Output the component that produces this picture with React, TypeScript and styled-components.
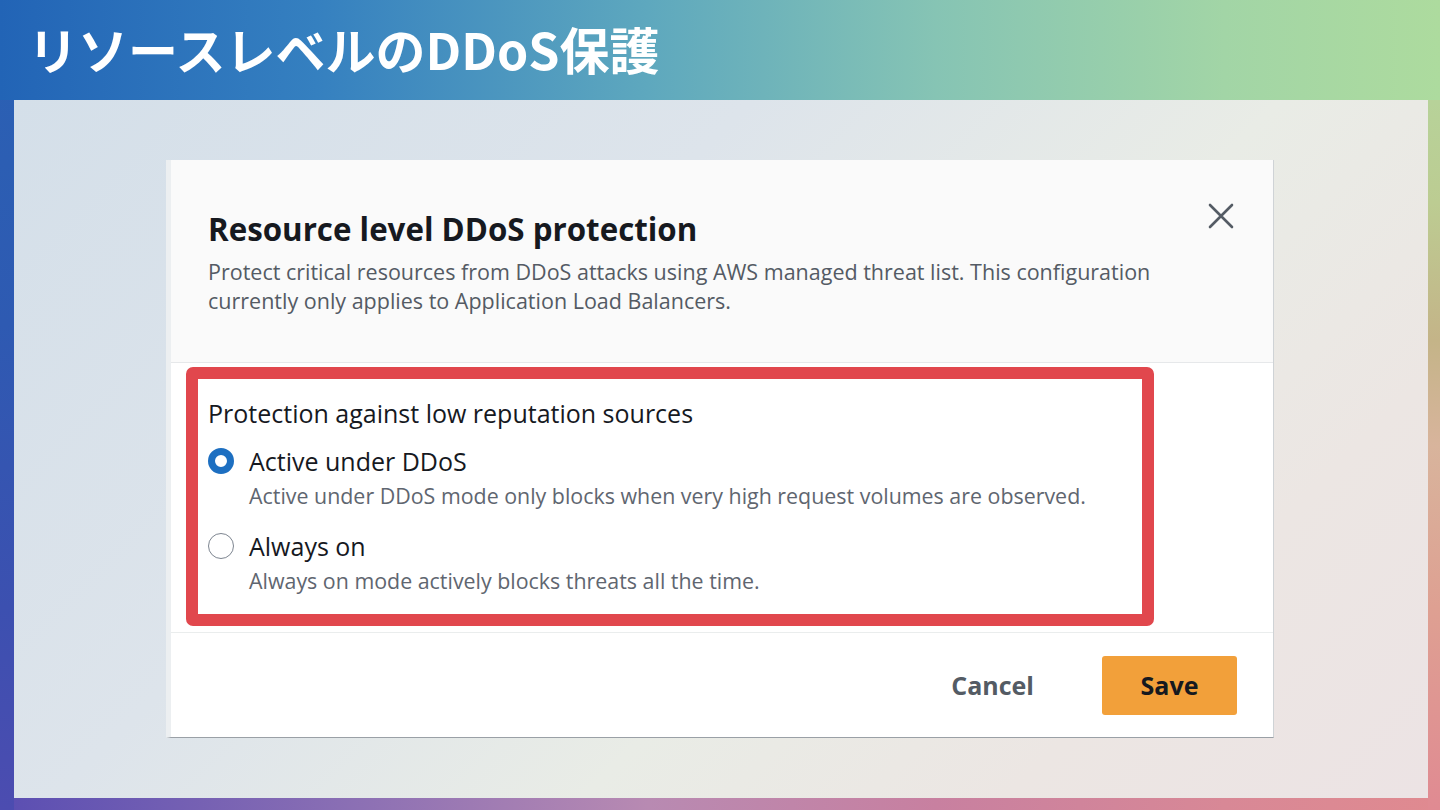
import React from "react";
import styled, { createGlobalStyle } from "styled-components";

const GlobalStyle = createGlobalStyle`
  html, body { margin: 0; padding: 0; }
  body { font-family: "Open Sans", "Noto Sans", sans-serif; }
`;

const Slide = styled.div`
  width: 1440px;
  height: 810px;
  display: flex;
  flex-direction: column;
  overflow: hidden;
  background:
    linear-gradient(to right, #2264b6 0%, #3580c0 22%, #5ea8be 45%, #86c4b4 65%, #a2d5a6 85%, #addb9e 100%) 0 0 / 100% 100px no-repeat,
    linear-gradient(to bottom, #2a62b4 0%, #2e5ab2 40%, #3c50b0 75%, #4c4cb0 100%) 0 0 / 14px 100% no-repeat,
    linear-gradient(to bottom, #b2d8a0 0%, #bccc92 25%, #c4b488 42%, #d8b49c 55%, #dea092 75%, #e08a92 100%) 100% 0 / 12px 100% no-repeat,
    linear-gradient(to right, #5a4eb2 0%, #8c70b4 25%, #b88ab2 45%, #c880a0 65%, #d88896 85%, #e08a90 100%) 0 100% / 100% 12px no-repeat,
    #8a9ab8;
`;

const TitleBar = styled.header`
  height: 100px;
  flex: none;
  display: flex;
  align-items: center;
  padding-left: 28px;
  box-sizing: border-box;
`;

const Title = styled.h1`
  margin: 0;
  color: #ffffff;
  font-family: "Noto Sans CJK JP", "Noto Sans", sans-serif;
  font-weight: 700;
  font-size: 50px;
  letter-spacing: 0;
  line-height: 1;
  padding-bottom: 4px;
`;

const Panel = styled.main`
  flex: 1;
  margin: 0 12px 12px 14px;
  padding: 60px 0 0 152px;
  box-sizing: border-box;
  background: linear-gradient(135deg, #d4dfe9 0%, #dde4eb 35%, #e9ece6 60%, #ece6e3 80%, #ece3e4 100%);
`;

const Dialog = styled.section`
  width: 1108px;
  height: 578px;
  display: flex;
  flex-direction: column;
  background: #ffffff;
  border-left: 5px solid #eceff1;
  border-right: 1px solid #cfd3d6;
  border-bottom: 1.5px solid #9aa0a6;
  box-sizing: border-box;
`;

const Header = styled.div`
  height: 203px;
  flex: none;
  position: relative;
  background: #fafafa;
  border-bottom: 1px solid #e6e8ea;
  padding: 49px 60px 0 37px;
  box-sizing: border-box;
`;

const Heading = styled.h2`
  margin: 0;
  font-size: 31.3px;
  line-height: 40px;
  font-weight: 700;
  color: #16191f;
`;

const Description = styled.p`
  margin: 8px 0 0;
  font-size: 21.5px;
  line-height: 29px;
  color: #545b64;
  max-width: 1000px;
`;

const CloseButton = styled.button`
  position: absolute;
  top: 42px;
  right: 38px;
  width: 28px;
  height: 28px;
  padding: 0;
  border: none;
  background: transparent;
  display: flex;
  align-items: center;
  justify-content: center;
`;

const Body = styled.div`
  flex: 1;
  padding: 4px 0 0 15px;
  box-sizing: border-box;
  border-bottom: 1px solid #eaeded;
`;

const Highlight = styled.div`
  width: 968px;
  height: 259px;
  border: 12px solid #e1474d;
  border-radius: 7px;
  padding: 19px 0 0 10px;
  box-sizing: border-box;
  display: flex;
  flex-direction: column;
`;

const GroupLabel = styled.div`
  font-size: 25px;
  line-height: 30px;
  color: #16191f;
  margin-bottom: 18px;
`;

const Option = styled.label`
  display: grid;
  grid-template-columns: 26px 1fr;
  column-gap: 15px;
  margin-bottom: 20px;
`;

const Radio = styled.span<{ $checked?: boolean }>`
  width: 26px;
  height: 26px;
  margin-top: 2px;
  border-radius: 50%;
  box-sizing: border-box;
  border: ${(p) => (p.$checked ? "7.5px solid #1d6fc1" : "1.5px solid #7d8590")};
  background: #ffffff;
`;

const OptionText = styled.div`
  display: flex;
  flex-direction: column;
`;

const OptionTitle = styled.span`
  font-size: 25px;
  line-height: 30px;
  color: #16191f;
`;

const OptionDesc = styled.span`
  margin-top: 5px;
  font-size: 21.4px;
  line-height: 30px;
  color: #5f6670;
`;

const Footer = styled.div`
  height: 104px;
  flex: none;
  display: flex;
  align-items: center;
  justify-content: flex-end;
  padding: 0 36px 0 0;
  gap: 48px;
  box-sizing: border-box;
`;

const TextButton = styled.button`
  border: none;
  background: transparent;
  padding: 0 20px;
  font-family: "Open Sans", "Noto Sans", sans-serif;
  font-size: 25px;
  font-weight: 700;
  color: #545b64;
  height: 59px;
`;

const PrimaryButton = styled.button`
  width: 135px;
  height: 59px;
  border: none;
  border-radius: 3px;
  background: #f2a03a;
  font-family: "Open Sans", "Noto Sans", sans-serif;
  font-size: 25px;
  font-weight: 700;
  color: #16191f;
`;

export default function App() {
  return (
    <>
      <GlobalStyle />
      <Slide>
        <TitleBar>
          <Title>リソースレベルのDDoS保護</Title>
        </TitleBar>
        <Panel>
          <Dialog>
            <Header>
              <Heading>Resource level DDoS protection</Heading>
              <Description>
                Protect critical resources from DDoS attacks using AWS managed threat list. This configuration
                currently only applies to Application Load Balancers.
              </Description>
              <CloseButton aria-label="Close">
                <svg width="26" height="26" viewBox="0 0 26 26">
                  <path d="M2 2 L24 24 M24 2 L2 24" stroke="#545b64" strokeWidth="2.6" strokeLinecap="round" />
                </svg>
              </CloseButton>
            </Header>
            <Body>
              <Highlight>
                <GroupLabel>Protection against low reputation sources</GroupLabel>
                <Option>
                  <Radio $checked />
                  <OptionText>
                    <OptionTitle>Active under DDoS</OptionTitle>
                    <OptionDesc>Active under DDoS mode only blocks when very high request volumes are observed.</OptionDesc>
                  </OptionText>
                </Option>
                <Option>
                  <Radio />
                  <OptionText>
                    <OptionTitle>Always on</OptionTitle>
                    <OptionDesc>Always on mode actively blocks threats all the time.</OptionDesc>
                  </OptionText>
                </Option>
              </Highlight>
            </Body>
            <Footer>
              <TextButton>Cancel</TextButton>
              <PrimaryButton>Save</PrimaryButton>
            </Footer>
          </Dialog>
        </Panel>
      </Slide>
    </>
  );
}
